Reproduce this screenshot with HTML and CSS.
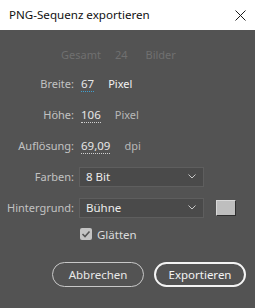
FILE: index.html
```html
<!DOCTYPE html>
<html>
<head>
<meta charset="utf-8">
<link rel="stylesheet" href="styles.css">
</head>
<body>
<div class="window">
  <div class="titlebar">
    <span class="title">PNG-Sequenz exportieren</span>
    <svg class="close" width="11" height="11" viewBox="0 0 11 11"><path d="M0.5 0.5 L10.5 10.5 M10.5 0.5 L0.5 10.5" stroke="#1a1a1a" stroke-width="1" fill="none"/></svg>
  </div>
  <div class="content">
    <div class="total">
      <span>Gesamt</span><span class="num">24</span><span>Bilder</span>
    </div>
    <div class="row">
      <span class="label">Breite:</span>
      <span class="value focus">67</span><span class="unit bright">Pixel</span>
    </div>
    <div class="row">
      <span class="label">Höhe:</span>
      <span class="value">106</span><span class="unit">Pixel</span>
    </div>
    <div class="row">
      <span class="label">Auflösung:</span>
      <span class="value">69,09</span><span class="unit">dpi</span>
    </div>
    <div class="row">
      <span class="label">Farben:</span>
      <div class="select"><span>8 Bit</span>
        <svg class="chev" width="8" height="5" viewBox="0 0 8 5"><path d="M0.5 0.5 L4 4 L7.5 0.5" stroke="#c8c8c8" stroke-width="1" fill="none"/></svg>
      </div>
    </div>
    <div class="row">
      <span class="label">Hintergrund:</span>
      <div class="select"><span>Bühne</span>
        <svg class="chev" width="8" height="5" viewBox="0 0 8 5"><path d="M0.5 0.5 L4 4 L7.5 0.5" stroke="#c8c8c8" stroke-width="1" fill="none"/></svg>
      </div>
      <div class="swatch"></div>
    </div>
    <div class="checkrow">
      <span class="check"><svg width="12" height="12" viewBox="0 0 12 12"><path d="M2.5 6 L5 8.5 L9.5 3.5" stroke="#555" stroke-width="1.6" fill="none"/></svg></span>
      <span class="checklabel">Glätten</span>
    </div>
    <div class="buttons">
      <button class="btn">Abbrechen</button>
      <button class="btn primary">Exportieren</button>
    </div>
  </div>
</div>
</body>
</html>
```
FILE: styles.css
```css
html, body {
  margin: 0;
  padding: 0;
}
body {
  width: 255px;
  height: 308px;
  background: #535353;
  font-family: "Noto Sans", "Open Sans", sans-serif;
  font-size: 11px;
  overflow: hidden;
}
.window {
  display: flex;
  flex-direction: column;
  height: 308px;
}
.titlebar {
  height: 30px;
  background: #ffffff;
  display: flex;
  align-items: center;
  justify-content: space-between;
  padding: 0 9px 0 9px;
  box-sizing: border-box;
}
.title {
  color: #111;
  font-size: 11.6px;
  margin-top: -1px;
}
.close {
  display: block;
}
.content {
  display: flex;
  flex-direction: column;
  padding-top: 13px;
}
.total {
  height: 22px;
  display: flex;
  align-items: center;
  padding-left: 61px;
  color: #707070;
  gap: 14px;
}
.total .num {
  margin-right: 4px;
}
.total + .row {
  margin-top: 3px;
}
.row {
  height: 31px;
  display: flex;
  align-items: center;
}
.label {
  width: 74px;
  text-align: right;
  color: #c2c2c2;
  flex: none;
}
.value {
  margin-left: 7px;
  color: #e6e6e6;
  border-bottom: 1px dotted #d0d0d0;
  line-height: 14px;
  margin-top: 1px;
  font-size: 11.5px;
}
.value.focus {
  border-bottom-color: #3fa0d0;
}
.unit {
  margin-left: 14px;
  color: #b8b8b8;
}
.unit.bright {
  color: #f2f2f2;
}
.select {
  margin-left: 5px;
  width: 125px;
  height: 20px;
  box-sizing: border-box;
  background: #4a4a4a;
  border: 1px solid #5e5e5e;
  display: flex;
  align-items: center;
  justify-content: space-between;
  padding: 0 7px 0 6px;
  color: #ececec;
  font-size: 11.5px;
}
.chev {
  display: block;
}
.swatch {
  margin-left: 12px;
  width: 20px;
  height: 16px;
  box-sizing: border-box;
  background: #bebebe;
  border: 1px solid #2e2e2e;
  border-top-color: #d8d8d8;
  border-left-color: #d8d8d8;
}
.checkrow {
  height: 22px;
  display: flex;
  align-items: center;
  padding-left: 80px;
}
.check {
  width: 12px;
  height: 12px;
  background: #c4c4c4;
  border-radius: 2px;
  display: block;
}
.check svg {
  display: block;
}
.checklabel {
  margin-left: 5px;
  color: #dcdcdc;
  font-size: 11.5px;
}
.buttons {
  display: flex;
  justify-content: flex-end;
  gap: 10px;
  padding-right: 9px;
  margin-top: 17px;
}
.btn {
  width: 92px;
  height: 25px;
  box-sizing: border-box;
  border-radius: 13px;
  background: transparent;
  border: 1px solid #c8c8c8;
  color: #e8e8e8;
  font-family: "Noto Sans", "Open Sans", sans-serif;
  font-size: 11.5px;
  padding: 0;
}
.btn.primary {
  border: 2px solid #f4f4f4;
  color: #f4f4f4;
}
```
